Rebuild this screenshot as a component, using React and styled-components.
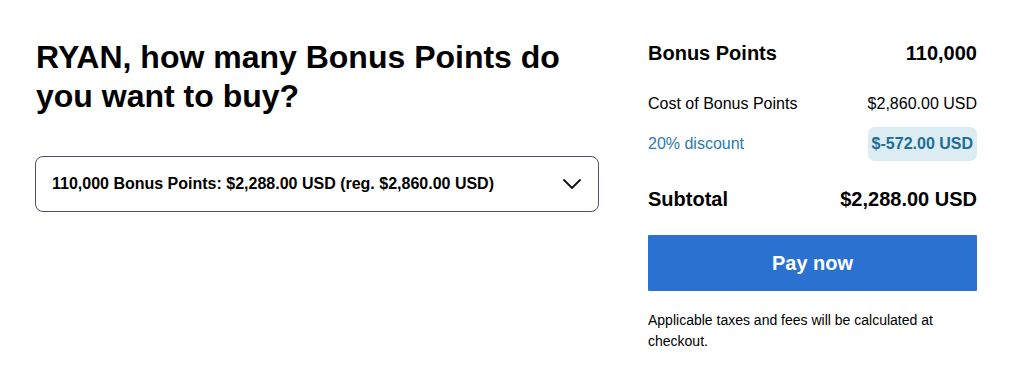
import styled, { createGlobalStyle } from 'styled-components';

const GlobalStyle = createGlobalStyle`
  body {
    margin: 0;
    background: #fff;
    font-family: "Liberation Sans", Arial, Helvetica, sans-serif;
    color: #000;
  }
`

const Page = styled.div`
  display: flex;
  gap: 49px;
  padding: 38px 0 0 35px;
`

const Left = styled.div`
  width: 564px;
`

const Title = styled.h1`
  margin: 0 0 0 1px;
  font-size: 32px;
  line-height: 39px;
  font-weight: 700;
  width: 540px;
`

const Select = styled.button`
  margin-top: 40px;
  width: 100%;
  height: 56px;
  display: flex;
  align-items: center;
  justify-content: space-between;
  padding: 0 17px 0 16px;
  border: 1px solid #4a5260;
  border-radius: 8px;
  background: #fff;
  font-family: inherit;
  font-size: 16px;
  font-weight: 700;
  color: #000;
  cursor: pointer;
`

const Summary = styled.div`
  width: 329px;
  padding-top: 3px;
`

const Row = styled.div`
  display: flex;
  justify-content: space-between;
  align-items: center;
  font-size: ${p => p.$size || 16}px;
  font-weight: ${p => (p.$bold ? 700 : 400)};
  line-height: ${p => p.$lh || 20}px;
  margin-top: ${p => p.$mt || 0}px;
  color: ${p => p.$color || '#000'};
`

const Badge = styled.span`
  display: inline-block;
  background: #dcecf3;
  color: #1f6d97;
  font-weight: 700;
  line-height: 20px;
  padding: 7px 4px;
  border-radius: 7px;
`

const PayButton = styled.button`
  display: block;
  width: 100%;
  height: 56px;
  margin-top: 23px;
  border: none;
  border-radius: 1px;
  background: #2b72d0;
  color: #fff;
  font-family: inherit;
  font-size: 20px;
  font-weight: 700;
  cursor: pointer;
`

const Note = styled.p`
  margin: 19px 0 0;
  font-size: 14px;
  line-height: 21px;
  width: 300px;
`

function App() {
  return (
    <Page>
      <GlobalStyle />
      <Left>
        <Title>RYAN, how many Bonus Points do you want to buy?</Title>
        <Select>
          <span>110,000 Bonus Points: $2,288.00 USD (reg. $2,860.00 USD)</span>
          <svg width="18" height="10" viewBox="0 0 18 10" fill="none">
            <path d="M1 1l8 8 8-8" stroke="#111" strokeWidth="1.8" strokeLinecap="round" strokeLinejoin="round" />
          </svg>
        </Select>
      </Left>
      <Summary>
        <Row $size={20} $bold $lh={24}>
          <span>Bonus Points</span>
          <span>110,000</span>
        </Row>
        <Row $mt={29}>
          <span>Cost of Bonus Points</span>
          <span>$2,860.00 USD</span>
        </Row>
        <Row $mt={13} $color="#2a7ab0">
          <span>20% discount</span>
          <Badge>$-572.00 USD</Badge>
        </Row>
        <Row $size={20} $bold $lh={26} $mt={25}>
          <span>Subtotal</span>
          <span>$2,288.00 USD</span>
        </Row>
        <PayButton>Pay now</PayButton>
        <Note>Applicable taxes and fees will be calculated at checkout.</Note>
      </Summary>
    </Page>
  );
}

export default App;
